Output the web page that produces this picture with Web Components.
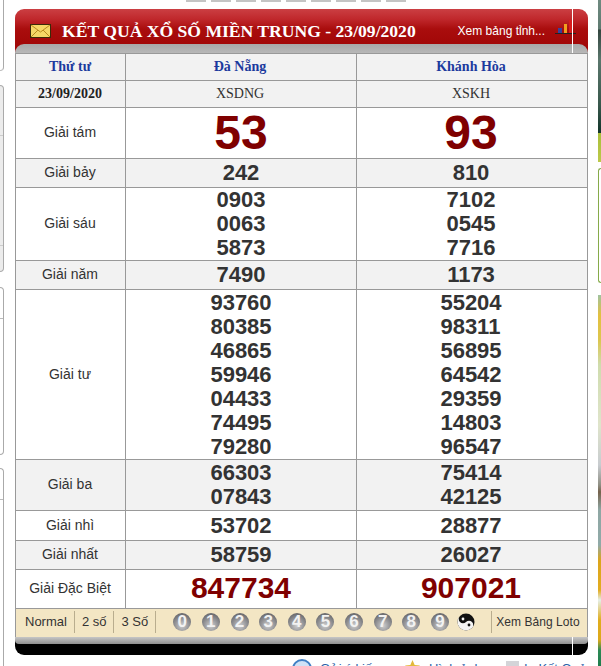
<!DOCTYPE html>
<html lang="vi">
<head>
<meta charset="utf-8">
<title>Kết quả xổ số miền Trung</title>
<style>
  html,body{margin:0;padding:0;background:#fff;height:666px;overflow:hidden}
</style>
</head>
<body>
<xs-page>
  <xs-tabs></xs-tabs>
  <xs-board title-text="KẾT QUẢ XỔ SỐ MIỀN TRUNG - 23/09/2020" link="Xem bảng tỉnh...">
    <xs-row label="Thứ tư" head h="27" alt style="--label-color:#1c3a9e">
      <xs-prize type="city" numbers="Đà Nẵng"></xs-prize>
      <xs-prize type="city" numbers="Khánh Hòa"></xs-prize>
    </xs-row>
    <xs-row label="23/09/2020" head h="27" alt>
      <xs-prize type="code" numbers="XSDNG"></xs-prize>
      <xs-prize type="code" numbers="XSKH"></xs-prize>
    </xs-row>
    <xs-row label="Giải tám" h="51">
      <xs-prize type="big" numbers="53"></xs-prize>
      <xs-prize type="big" numbers="93"></xs-prize>
    </xs-row>
    <xs-row label="Giải bảy" h="29" alt>
      <xs-prize numbers="242"></xs-prize>
      <xs-prize numbers="810"></xs-prize>
    </xs-row>
    <xs-row label="Giải sáu" h="73">
      <xs-prize numbers="0903 0063 5873"></xs-prize>
      <xs-prize numbers="7102 0545 7716"></xs-prize>
    </xs-row>
    <xs-row label="Giải năm" h="29" alt>
      <xs-prize numbers="7490"></xs-prize>
      <xs-prize numbers="1173"></xs-prize>
    </xs-row>
    <xs-row label="Giải tư" h="170">
      <xs-prize numbers="93760 80385 46865 59946 04433 74495 79280"></xs-prize>
      <xs-prize numbers="55204 98311 56895 64542 29359 14803 96547"></xs-prize>
    </xs-row>
    <xs-row label="Giải ba" h="51" alt>
      <xs-prize numbers="66303 07843"></xs-prize>
      <xs-prize numbers="75414 42125"></xs-prize>
    </xs-row>
    <xs-row label="Giải nhì" h="30">
      <xs-prize numbers="53702"></xs-prize>
      <xs-prize numbers="28877"></xs-prize>
    </xs-row>
    <xs-row label="Giải nhất" h="29" alt>
      <xs-prize numbers="58759"></xs-prize>
      <xs-prize numbers="26027"></xs-prize>
    </xs-row>
    <xs-row label="Giải Đặc Biệt" h="39">
      <xs-prize type="special" numbers="847734"></xs-prize>
      <xs-prize type="special" numbers="907021"></xs-prize>
    </xs-row>
  </xs-board>
  <xs-links></xs-links>
</xs-page>

<script>
!(function () {
  const SANS = `"Liberation Sans", Arial, sans-serif`;
  const SERIF = `"Liberation Serif", "Times New Roman", serif`;

  // small helper, every element below is the same shape: html in an open shadow root
  const define = (name, html, proto = {}) =>
    customElements.define(
      name,
      class extends HTMLElement {
        constructor() {
          super().attachShadow({ mode: "open" }).innerHTML = html;
        }
        connectedCallback() {
          if (proto.render) proto.render.call(this);
        }
      }
    );

  // ********************************************************** <xs-page>
  define(
    "xs-page",
    /* html */ `<style>
      :host{display:flex;width:601px;height:666px;overflow:hidden}
      main{width:573px;flex:none}
      aside{width:3px;margin-left:10px;flex:none;display:flex;flex-direction:column}
      .dark{height:133px;background:linear-gradient(#6f8a80 0,#5e7a70 29px,#33453f 30px,#5b776d 60px,#38584c 105px,#12352a 133px)}
      .lime{height:29px;background:linear-gradient(#a9bf3a,#bcc94a)}
      .frame{height:115px;margin-top:6px;border:solid #86ab4a;border-width:1px 0 1px 1px;border-radius:4px 0 0 4px;box-sizing:border-box}
      .photo{flex:1;margin-top:12px;background:linear-gradient(#9fc3a0 0,#e3c040 20px,#dcc64e 45px,#cfdcae 70px,#dfe4cb 130px,#c8ccd0 170px,#8f8f84 190px,#75624c 197px,#8fa7a4 215px,#90aaa8 250px,#dba51c 265px,#e2ac20 295px,#e4efe8 305px,#e0ad1e 325px,#dca81a 345px,#2d8a55 355px,#1f7c4c 371px)}
    </style>
    <xs-side></xs-side>
    <main><slot></slot></main>
    <aside><div class="dark"></div><div class="lime"></div><div class="frame"></div><div class="photo"></div></aside>`
  );

  // ********************************************************** <xs-side> left menu edge
  define(
    "xs-side",
    /* html */ `<style>
      :host{display:flex;flex-direction:column;width:15px;flex:none;height:666px}
      div{box-sizing:border-box;width:4px;border-right:1px solid #aaa;flex:none}
      .a{height:71px;border-bottom:1px solid #bbb;border-radius:0 0 4px 0}
      .b{height:187px;margin-top:14px;border:solid #aaa;border-width:1px 1px 1px 0;border-radius:0 4px 4px 0;background:linear-gradient(#ccc,#ccc) no-repeat 0 49px/100% 1px,linear-gradient(#ccc,#ccc) no-repeat 0 159px/100% 1px,#ececec}
      .c{height:168px;margin-top:15px;border:solid #aaa;border-width:1px 1px 1px 0;border-radius:0 4px 4px 0;background:linear-gradient(#bbb,#bbb) no-repeat 0 30px/100% 1px}
      .d{flex:1;margin-top:13px;border-top:1px solid #aaa;border-radius:0 4px 0 0;background:linear-gradient(#bbb,#bbb) no-repeat 0 30px/100% 1px}
    </style><div class="a"></div><div class="b"></div><div class="c"></div><div class="d"></div>`
  );

  // ********************************************************** <xs-tabs> cut off strip on top
  define(
    "xs-tabs",
    /* html */ `<style>
      :host{display:flex;gap:5px;height:2px;padding-left:171px;margin-bottom:7px}
      i{width:20px;height:2px;background:#c4c4c4}
    </style>${"<i></i>".repeat(9)}`
  );

  // ********************************************************** <xs-board>
  define(
    "xs-board",
    /* html */ `<style>
      :host{display:block;position:relative;font-family:${SANS}}
      header{height:44px;border-radius:9px 9px 0 0;position:relative;overflow:hidden;background:linear-gradient(#cb3f43 0,#c0282c 10px,#a90d0d 20px,#9e0404 100%)}
      .bar{box-sizing:border-box;height:35px;padding:9px 12px 0 15px;display:flex;align-items:center}
      .band{height:9px;background:linear-gradient(#a8a8a8,#b8b8b8);border-radius:9px 9px 0 0}
      h1{margin:0 0 0 11px;font:bold 17.6px ${SERIF};color:#fff;white-space:nowrap;flex:1}
      a{font:12px ${SANS};color:#fff;text-decoration:none;margin-right:10px;white-space:nowrap}
      svg{display:block;flex:none}
      .rule{position:absolute;left:557px;width:1px;background:#fff}
      .rule.top{top:0;height:44px}
      .rule.bottom{bottom:0;height:18px}
      footer{height:29px;display:flex;align-items:center;padding-bottom:2px;background:#f3e6c4;border:solid #999;border-width:1px 1px 0;box-sizing:border-box;font:12px ${SANS};color:#333;letter-spacing:.1px}
      footer span{padding:0 7px;line-height:22px;border-right:1px solid #b9ad8e;white-space:nowrap}
      footer span.first{padding:0 7px 0 9px;font-size:13px;letter-spacing:0}
      footer span.mid{font-size:13px;letter-spacing:0}
      footer span.last{border-right:0;border-left:1px solid #b9ad8e;padding:0 0 0 4px;letter-spacing:.05px}
      .balls{display:flex;align-items:center;gap:10.65px;margin-left:17px;width:318px}
      .edge{height:18px;background:#000;border-radius:0 0 9px 9px;position:relative}
      .edge::before{content:"";display:block;height:7px;background:linear-gradient(#c6c6c6,#8f8f8f);border-radius:0 0 4px 4px}
    </style>
    <header>
      <div class="bar">
        <svg width="21" height="14" viewBox="0 0 21 14"><rect x=".5" y=".5" width="20" height="13" fill="#f5d766" stroke="#3b2a08"/><path d="M1 1l9.500 7L20 1M1 13l7-7M20 13l-7-7" fill="none" stroke="#b88a1e"/></svg>
        <h1></h1>
        <a href="#"></a>
        <svg width="21" height="15" viewBox="0 0 21 15" style="margin-top:-7px"><rect x="3" y="8" width="4" height="5" fill="#3b3f9c"/><rect x="9" y="4" width="3" height="9" fill="#f0a020"/><rect x="14" y="0" width="3" height="13" fill="#d81c1c"/><rect x="0" y="13" width="21" height="1" fill="#222"/></svg>
      </div>
      <div class="band"></div>
      <div class="rule top"></div>
    </header>
    <slot></slot>
    <footer>
      <span class="first">Normal</span><span class="mid">2 số</span><span class="mid">3 Số</span>
      <div class="balls">
        ${[0, 1, 2, 3, 4, 5, 6, 7, 8, 9].map((n) => `<xs-ball>${n}</xs-ball>`).join("")}
        <svg width="18" height="18" viewBox="0 0 18 18" style="margin-left:-3px"><circle cx="9" cy="9" r="8.500" fill="#111"/><path d="M9 .5A8.500 8.500 0 0 0 9 17.500A4.250 4.250 0 0 0 9 9A4.250 4.250 0 0 1 9 .5z" fill="#f4f4f4" transform="rotate(-45 9 9)"/><circle cx="6" cy="6" r="1.400" fill="#f4f4f4"/><circle cx="12" cy="12" r="1.400" fill="#111"/></svg>
      </div>
      <span class="last">Xem Bảng Loto</span>
    </footer>
    <div class="edge"><div class="rule bottom"></div></div>`,
    {
      render() {
        this.shadowRoot.querySelector("h1").textContent = this.getAttribute("title-text");
        this.shadowRoot.querySelector("a").textContent = this.getAttribute("link");
      },
    }
  );

  // ********************************************************** <xs-row>
  define(
    "xs-row",
    /* html */ `<style>
      :host{display:flex;box-sizing:border-box;border:solid #999;border-width:1px 1px 0;background:#fff}
      :host([alt]){background:#f2f2f2}
      .label{width:109px;flex:none;display:flex;align-items:center;justify-content:center;font:14px ${SANS};color:#333;padding:0 1px 2px 0;box-sizing:border-box}
      :host([head]) .label{font:bold 14px ${SERIF};color:var(--label-color,#222);padding-bottom:0}
      ::slotted(xs-prize){width:231px;flex:none;box-sizing:border-box;border-left:1px solid #999}
      ::slotted(xs-prize:last-child){padding-right:2px}
    </style><div class="label"></div><slot></slot>`,
    {
      render() {
        this.style.height = this.getAttribute("h") + "px";
        this.shadowRoot.querySelector(".label").textContent = this.getAttribute("label");
      },
    }
  );

  // ********************************************************** <xs-prize>
  define(
    "xs-prize",
    /* html */ `<style>
      :host{display:flex;flex-direction:column;align-items:center;justify-content:center;font:bold 22px/24px ${SANS};color:#333}
      :host([type=big]){font-size:48px;line-height:48px;color:#7f0000}
      :host([type=special]){font-size:30px;line-height:36px;color:#7f0000;padding-bottom:2px}
      :host([type=city]){font:bold 14px ${SERIF};color:#1c3a9e;padding-right:2px}
      :host([type=code]){font:14px ${SERIF};color:#333;padding-right:2px}
    </style><div id="n"></div>`,
    {
      render() {
        const type = this.getAttribute("type");
        const numbers = this.getAttribute("numbers");
        const lines = type == "city" ? [numbers] : numbers.split(" ");
        this.shadowRoot.querySelector("#n").innerHTML = lines.map((x) => `<div>${x}</div>`).join("");
      },
    }
  );

  // ********************************************************** <xs-ball>
  define(
    "xs-ball",
    /* html */ `<style>
      :host{display:flex;align-items:center;justify-content:center;width:18px;height:18px;flex:none;border-radius:50%;background:radial-gradient(circle at 50% 70%,#cfcfcf 0,#97979a 42%,#4e4e52 100%);color:#f2f2f2;font:bold 17px ${SANS}}
    </style><slot></slot>`
  );

  // ********************************************************** <xs-links> below the board, mostly cut off
  define(
    "xs-links",
    /* html */ `<style>
      :host{display:flex;align-items:flex-start;margin-top:4px;padding-left:277px;font:13px/16px ${SANS};color:#2a62a8;white-space:nowrap}
      svg{flex:none;display:block}
      span{margin-left:8px}
    </style>
    <svg width="20" height="20" viewBox="0 0 20 20"><circle cx="10" cy="10" r="9" fill="#cfe2f6" stroke="#3f7fc4" stroke-width="2"/></svg>
    <span style="margin-top:2px;width:86px">Gửi ý kiến</span>
    <svg width="15" height="15" viewBox="0 0 16 16" style="margin-top:1px;margin-left:-1px"><path d="M8 0l2.300 5.200 5.700.6-4.200 3.800 1.200 5.600L8 12.300 3 15.200l1.200-5.600L0 5.800l5.700-.6z" fill="#e3b93a"/></svg>
    <span style="margin-top:2px;margin-left:9px;width:75px">Hình ảnh</span>
    <svg width="13" height="13" viewBox="0 0 13 13" style="margin-top:2px;margin-left:2px"><rect width="13" height="13" fill="#d4d4d8"/></svg>
    <span style="margin-top:2px;margin-left:5px">In Kết Quả</span>`
  );
  // ********************************************************** end IIFE
})();
</script>
</body>
</html>
